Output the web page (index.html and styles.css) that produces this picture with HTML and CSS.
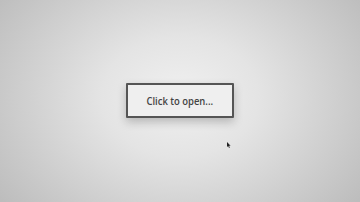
FILE: index.html
```html
<!DOCTYPE html>
<html lang="en">
<head>
  <meta charset="UTF-8">
  <meta name="viewport" content="width=device-width, initial-scale=1.0">
  <title>Click to open</title>
  <link rel="stylesheet" href="styles.css">
</head>
<body>

<div class="stage">
  <button class="open-btn"><span class="label">Click to open...</span></button>
  <svg class="cursor" width="4" height="6" viewBox="0 0 4 6">
    <path d="M0 0 L0 5 L1.2 4 L2 6 L2.8 5.6 L2 3.8 L3.6 3.8 Z" fill="#222"/>
  </svg>
</div>

</body>
</html>
```

FILE: styles.css
```css
/* Fundo da página */
html, body {
  margin: 0;
  height: 100%;
}
body {
  background: radial-gradient(ellipse 62% 85% at 50% 48%, #f0f0f0 0%, #e4e4e4 35%, #cfcfcf 70%, #bdbdbd 100%);
  font-family: "Open Sans", "Noto Sans", sans-serif;
}
.stage {
  position: relative;
  height: 202px;
  display: flex;
  justify-content: center;
  align-items: center;
}
.open-btn {
  width: 108px;
  height: 35px;
  margin-top: -1px;
  padding: 0;
  background: #efefef;
  border: 2px solid #555;
  border-radius: 1px;
  box-shadow: 0 4px 10px rgba(0, 0, 0, 0.22);
  color: #444;
  font-family: inherit;
  font-size: 11px;
  font-weight: 600;
  cursor: pointer;
}
.label {
  display: inline-block;
  transform: scaleX(0.86);
}
/* ponteiro do mouse */
.cursor {
  position: absolute;
  left: 227px;
  top: 142px;
}
```
